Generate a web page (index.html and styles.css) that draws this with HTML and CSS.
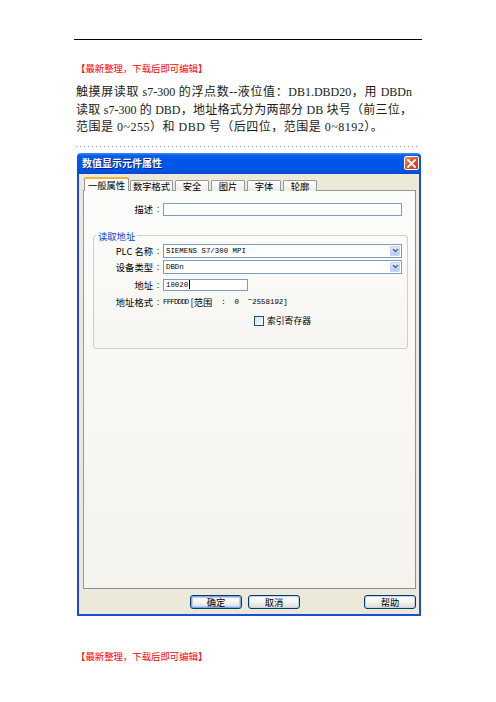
FILE: index.html
```html
<!DOCTYPE html>
<html lang="zh-CN">
<head>
<meta charset="utf-8">
<title>数值显示元件属性</title>
<link rel="stylesheet" href="styles.css">
</head>
<body>
<div class="page">
  <div class="header-rule"></div>
  <div class="note">【最新整理，下载后即可编辑】</div>
  <div class="para">
    <span class="ln jl">触摸屏读取 s7-300 的浮点数--液位值：DB1.DBD20，用 DBDn</span>
    <span class="ln jl">读取 s7-300 的 DBD，地址格式分为两部分 DB 块号（前三位，</span>
    <span class="ln last">范围是 0~255）和 DBD 号（后四位，范围是 0~8192）。</span>
  </div>
  <div class="cutline" aria-hidden="true"></div>

  <div class="dialog">
    <div class="titlebar">
      <span class="title">数值显示元件属性</span>
      <span class="close"><svg width="9" height="9" viewBox="0 0 9 9"><path d="M1 1L8 8M8 1L1 8" stroke="#fff" stroke-width="1.8" stroke-linecap="square"/></svg></span>
    </div>
    <div class="dlg-body">
      <div class="tabs">
        <span class="tab active">一般属性</span>
        <span class="tab w4">数字格式</span>
        <span class="tab">安全</span>
        <span class="tab">图片</span>
        <span class="tab">字体</span>
        <span class="tab">轮廓</span>
      </div>
      <div class="panel">
        <div class="row desc-row">
          <span class="lbl">描述</span><span class="colon">:</span><span class="input"></span>
        </div>
        <fieldset class="group">
          <legend>读取地址</legend>
          <div class="row">
            <span class="lbl">PLC 名称</span><span class="colon">:</span>
            <span class="select"><span class="val">SIEMENS S7/300 MPI</span><span class="drop"><svg width="7" height="5" viewBox="0 0 7 5"><path d="M1 1L3.5 3.5L6 1" fill="none" stroke="#4d6185" stroke-width="1.4"/></svg></span></span>
          </div>
          <div class="row r-type">
            <span class="lbl">设备类型</span><span class="colon">:</span>
            <span class="select"><span class="val">DBDn</span><span class="drop"><svg width="7" height="5" viewBox="0 0 7 5"><path d="M1 1L3.5 3.5L6 1" fill="none" stroke="#4d6185" stroke-width="1.4"/></svg></span></span>
          </div>
          <div class="row r-addr">
            <span class="lbl">地址</span><span class="colon">:</span>
            <span class="field-cell"><span class="input short"><span class="val">10020</span><span class="caret"></span></span></span>
          </div>
          <div class="row r-fmt">
            <span class="lbl">地址格式</span><span class="colon">:</span>
            <span class="fmt"><span class="mono tight">FFFDDDD</span><span class="cjk"> [范围</span><span class="mono">  :  0  </span><span class="mono tilde">~</span><span class="mono">2558192]</span></span>
          </div>
          <div class="row r-check">
            <span></span><span></span>
            <span class="check"><span class="box"></span><span class="check-lbl">索引寄存器</span></span>
          </div>
        </fieldset>
      </div>
      <div class="buttons">
        <span class="btn default">确定</span>
        <span class="btn cancel">取消</span>
        <span class="btn">帮助</span>
      </div>
    </div>
  </div>

  <div class="note bottom">【最新整理，下载后即可编辑】</div>
</div>
</body>
</html>
```

FILE: styles.css
```css
html, body {
  margin: 0;
  padding: 0;
  background: #ffffff;
}

.page {
  margin-left: 74px;
  width: 348px;
}

.header-rule {
  height: 39px;
  border-bottom: 1px solid #000;
}

.note {
  margin-top: 22px;
  padding-left: 2px;
  font-family: "Noto Sans CJK SC", sans-serif;
  font-size: 9.4px;
  line-height: 12px;
  color: #ff0000;
}

.note.bottom {
  margin-top: 34px;
}

.para {
  margin-top: 10px;
  padding-left: 2px;
  width: 336px;
  font-family: "Liberation Serif", "Noto Sans CJK SC", serif;
  font-size: 12px;
  line-height: 17.5px;
  color: #1a1a1a;
}

.ln {
  display: block;
  white-space: nowrap;
  text-align: justify;
}

.jl {
  text-align-last: justify;
}

.ln.last {
  letter-spacing: 0.5px;
}

.cutline {
  margin: 9.5px 0 0 2px;
  width: 344px;
  height: 1px;
  background: repeating-linear-gradient(90deg, #777 0 1px, transparent 1px 4px);
  opacity: 0.8;
}

/* ---------- dialog ---------- */
.dialog {
  margin-top: 5.5px;
  margin-left: 3px;
  width: 344px;
  font-family: "Noto Sans CJK SC", sans-serif;
  font-size: 9.3px;
  color: #000;
}

.titlebar {
  height: 21px;
  display: flex;
  align-items: center;
  justify-content: space-between;
  padding: 0 2px 0 5px;
  border-radius: 4px 4px 0 0;
  background: linear-gradient(#3c8cf7 0%, #0a5fe9 12%, #0055e5 40%, #0057ea 75%, #0649d0 100%);
}

.title {
  color: #fff;
  font-weight: bold;
  font-size: 10px;
  line-height: 12px;
  text-shadow: 1px 1px 0 #0a1e8c;
}

.close {
  width: 13px;
  height: 12px;
  display: flex;
  align-items: center;
  justify-content: center;
  border: 1px solid #fff;
  border-radius: 2px;
  background: linear-gradient(135deg, #f0926e 0%, #e2542c 45%, #c8391a 100%);
}

.dlg-body {
  background: #ece9d8;
  border: 2px solid #1a4bd9;
  border-top: 0;
  padding: 3px 3px 5px 4px;
}

.tabs {
  display: flex;
  align-items: flex-end;
  height: 14px;
  padding-left: 1px;
  gap: 2px;
  position: relative;
  z-index: 1;
  margin-bottom: -1px;
}

.tab {
  width: 32px;
  height: 10px;
  line-height: 10px;
  text-align: center;
  border: 1px solid #919b9c;
  border-bottom: 0;
  border-radius: 2px 2px 0 0;
  background: linear-gradient(#ffffff, #ecebe6);
  font-size: 9.3px;
}

.tab.w4 {
  width: 41px;
}

.tab.active {
  width: 43px;
  height: 12px;
  line-height: 13px;
  margin-right: -1px;
  border-top: 2px solid #f8b332;
  background: #fbfbf8;
}

.panel {
  height: 385px;
  border: 1px solid #919b9c;
  border-right-color: #8a9394;
  border-bottom-color: #8a9394;
  background: linear-gradient(#fcfcfa, #f4f3ee);
  padding: 12px 7px 0 9px;
}

.row {
  display: grid;
  grid-template-columns: 59px 10px 1fr;
  align-items: center;
  line-height: 12px;
}

.desc-row {
  padding-left: 1px;
  padding-right: 6px;
}

.lbl {
  text-align: right;
  white-space: nowrap;
}

.colon {
  text-align: center;
  font-family: "Liberation Sans", sans-serif;
  font-size: 9px;
}

.input {
  display: block;
  height: 11px;
  border: 1px solid #7f9db9;
  background: #fff;
}

.input.short {
  width: 81px;
  height: 10px;
  display: flex;
  align-items: center;
  padding-left: 2px;
}

.field-cell {
  display: block;
}

.caret {
  width: 1px;
  height: 9px;
  background: #000;
  margin-left: 0.5px;
}

.group {
  margin: 14px 0 0 0;
  padding: 2px 5px 21px 0;
  border: 1px solid #d0d0bf;
  border-radius: 3px;
  background: linear-gradient(#fbfbf9, #f6f5f1);
}

.group legend {
  margin-left: 2px;
  padding: 0 2px;
  line-height: 12px;
  color: #0046d5;
  font-size: 9.3px;
}

.select {
  height: 12px;
  display: flex;
  align-items: center;
  justify-content: space-between;
  border: 1px solid #7f9db9;
  background: #fff;
  padding-left: 2px;
}

.val {
  font-family: "Liberation Mono", monospace;
  font-size: 7.4px;
  line-height: 10px;
  white-space: pre;
}

.drop {
  width: 10px;
  height: 10px;
  margin-right: 1px;
  display: flex;
  align-items: center;
  justify-content: center;
  border: 1px solid #c3d3fd;
  border-radius: 1px;
  background: linear-gradient(#e3ebfd, #b7cbf8);
  box-sizing: border-box;
}

.r-type { margin-top: 2px; }
.r-addr { margin-top: 5px; }
.r-fmt { margin-top: 5px; }
.r-check { margin-top: 8px; }

.fmt {
  display: flex;
  align-items: center;
  white-space: pre;
}

.mono {
  font-family: "Liberation Mono", monospace;
  font-size: 7.4px;
}

.mono.tight {
  letter-spacing: -0.8px;
}

.mono.tilde {
  position: relative;
  top: -2px;
}

.cjk {
  font-size: 9.3px;
  white-space: pre;
}

.check {
  display: flex;
  align-items: center;
  padding-left: 91px;
  height: 11px;
}

.box {
  width: 8px;
  height: 8px;
  border: 1px solid #1c5180;
  background: linear-gradient(135deg, #dcdcd7, #ffffff);
  margin-right: 3px;
}

.check-lbl {
  font-size: 8.8px;
}

.buttons {
  display: flex;
  justify-content: flex-end;
  gap: 6px;
  margin-top: 6px;
}

.btn {
  width: 50px;
  height: 12px;
  line-height: 12px;
  text-align: center;
  border: 1px solid #003c74;
  border-radius: 3px;
  background: linear-gradient(#ffffff 0%, #f3f2ee 55%, #dcd8ce 100%);
  box-shadow: inset 0 0 0 1px #c6d4ea;
  font-size: 9.3px;
}

.btn.default {
  box-shadow: inset 0 0 0 1px #80a6ea, inset 0 0 0 2px #bccef3;
}

.btn.cancel {
  margin-right: 58px;
}
```
